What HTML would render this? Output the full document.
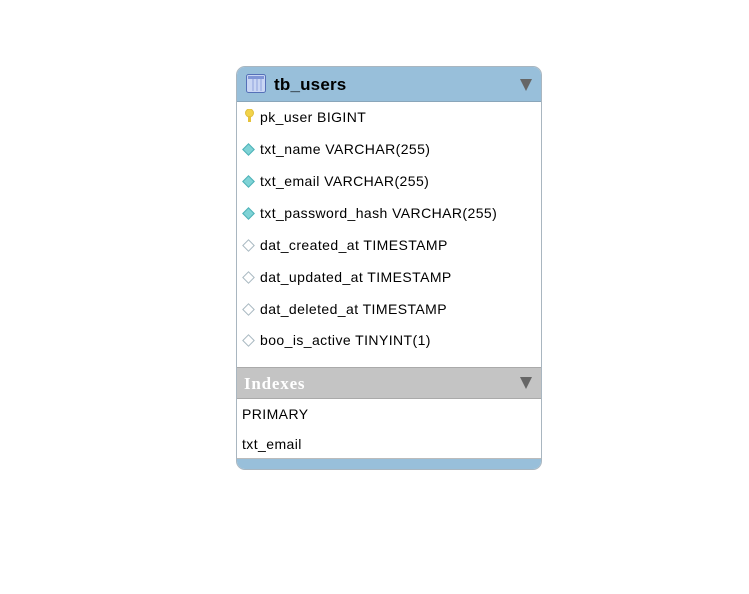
<!DOCTYPE html>
<html><head><style>
body{margin:0;width:749px;height:594px;background:#fff;position:relative;font-family:"Liberation Sans","DejaVu Sans",sans-serif;}
.box{position:absolute;left:236px;top:66px;width:304px;height:402px;border:1px solid #a9b6c0;border-radius:9px;overflow:hidden;background:#fff;}
.hdr{position:absolute;left:0;top:0;width:304px;height:34px;background:#98bfda;border-bottom:1px solid #8aa6ba;}
.hdr .t{position:absolute;left:37px;top:8px;font-weight:bold;font-size:17px;color:#000;letter-spacing:0.2px;}
.tri{position:absolute;width:0;height:0;border-left:6px solid transparent;border-right:6px solid transparent;border-top:12px solid #666;}
.row{position:absolute;left:23px;font-size:14px;color:#000;line-height:16px;letter-spacing:0.42px;}
.ico{position:absolute;left:7px;width:7px;height:7px;transform:rotate(45deg);}
.fill{background:#7fd3d6;border:1px solid #4cb0b6;}
.empty{background:#fff;border:1px solid #a8b8c0;}
.ihdr{position:absolute;left:0;top:300px;width:304px;height:30px;background:#c4c4c4;border-top:1px solid #aaa;border-bottom:1px solid #aaa;}
.ihdr .t{position:absolute;left:7px;top:6px;font-family:"Liberation Serif",serif;font-weight:bold;font-size:17px;color:#fff;letter-spacing:0.8px;}
.irow{position:absolute;left:5px;font-size:14px;color:#000;letter-spacing:0.42px;}
.foot{position:absolute;left:0;top:391px;width:304px;height:11px;background:#98bfda;border-top:1px solid #bbb;}
</style></head><body>
<div class="box">
 <div class="hdr">
  <svg style="position:absolute;left:9px;top:7px" width="20" height="19"><rect x="0.5" y="0.5" width="19" height="18" rx="2" fill="#c9d6f4" stroke="#5570b8"/><rect x="2" y="2" width="16" height="3" fill="#7f95d6"/><line x1="7" y1="5" x2="7" y2="17" stroke="#8ea2dc"/><line x1="11" y1="5" x2="11" y2="17" stroke="#8ea2dc"/><line x1="15" y1="5" x2="15" y2="17" stroke="#8ea2dc"/></svg>
  <div class="t">tb_users</div>
  <div class="tri" style="left:283px;top:12px"></div>
 </div>
 <svg style="position:absolute;left:8px;top:42px" width="9" height="14"><ellipse cx="4.5" cy="4" rx="4" ry="4" fill="#f2d34a" stroke="#e0c040"/><rect x="3" y="7" width="3" height="6" fill="#e6c23a"/></svg>
 <div class="row" style="top:42px">pk_user BIGINT</div>
 <div class="ico fill" style="top:78px"></div><div class="row" style="top:74px">txt_name VARCHAR(255)</div>
 <div class="ico fill" style="top:110px"></div><div class="row" style="top:106px">txt_email VARCHAR(255)</div>
 <div class="ico fill" style="top:142px"></div><div class="row" style="top:138px">txt_password_hash VARCHAR(255)</div>
 <div class="ico empty" style="top:174px"></div><div class="row" style="top:170px">dat_created_at TIMESTAMP</div>
 <div class="ico empty" style="top:206px"></div><div class="row" style="top:202px">dat_updated_at TIMESTAMP</div>
 <div class="ico empty" style="top:238px"></div><div class="row" style="top:234px">dat_deleted_at TIMESTAMP</div>
 <div class="ico empty" style="top:269px"></div><div class="row" style="top:265px">boo_is_active TINYINT(1)</div>
 <div class="ihdr"><div class="t">Indexes</div><div class="tri" style="left:283px;top:9px"></div></div>
 <div class="irow" style="top:339px">PRIMARY</div>
 <div class="irow" style="top:369px">txt_email</div>
 <div class="foot"></div>
</div>
</body></html>
